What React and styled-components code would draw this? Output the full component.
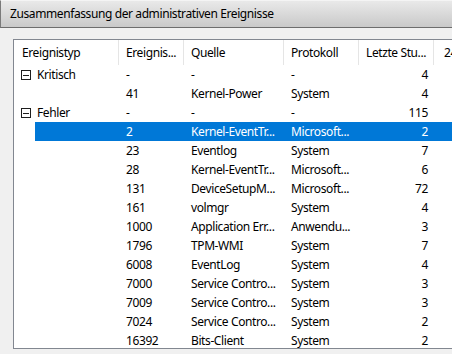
import React from 'react';
import styled, { createGlobalStyle, css } from 'styled-components';

const GlobalStyle = createGlobalStyle`
  html, body {
    margin: 0;
    padding: 0;
    background: #f0f0f0;
    overflow: hidden;
  }
  body {
    font-family: "Segoe UI", "Noto Sans", "Liberation Sans", sans-serif;
    font-size: 12px;
    letter-spacing: -0.4px;
    color: #000;
  }
`;

const Window = styled.div`
  width: 452px;
  height: 354px;
  overflow: hidden;
  background: #f0f0f0;
`;

const TitleBar = styled.div`
  height: 28px;
  box-sizing: border-box;
  border-left: 1px solid #7a7a7a;
  border-top: 1px solid #f4f4f4;
  border-bottom: 1px solid #6d6d6d;
  background: linear-gradient(#e9e9e9, #c9c9c9);
  display: flex;
  align-items: center;
  padding-left: 9px;
  padding-bottom: 1px;
  width: 600px;
`;

const Panel = styled.div`
  padding: 11px 0 0 13px;
`;

const ListBox = styled.div`
  width: 600px;
  height: 310px;
  box-sizing: border-box;
  border: 1px solid #828790;
  background: #fff;
  overflow: hidden;
`;

const COLS = '105px 65px 100px 75px 75px 120px';

const HeaderRow = styled.div`
  display: grid;
  grid-template-columns: ${COLS};
  height: 25px;
`;

const HeaderCell = styled.div`
  display: flex;
  align-items: center;
  padding-left: ${(p) => p.$pad ?? 7}px;
  border-right: 1px solid #e5e5e5;
  padding-bottom: 1px;
  white-space: nowrap;
  overflow: hidden;
`;

const Row = styled.div`
  display: grid;
  grid-template-columns: ${COLS};
  height: 19px;
  align-items: center;
  ${(p) =>
    p.$selected &&
    css`
      background: linear-gradient(to right, transparent 21px, #0078d7 21px);
      color: #fff;
    `}
`;

const Cell = styled.div`
  padding-left: 7px;
  padding-right: ${(p) => (p.$right ? 6 : 0)}px;
  white-space: nowrap;
  text-align: ${(p) => (p.$right ? 'right' : 'left')};
`;

const GroupCell = styled.div`
  display: flex;
  align-items: center;
  padding-left: 7px;
  gap: 6px;
  white-space: nowrap;
`;

const Toggle = styled.span`
  position: relative;
  width: 10px;
  height: 10px;
  box-sizing: border-box;
  border: 1px solid #1e1e1e;
  flex: none;
  &::after {
    content: '';
    position: absolute;
    left: 1px;
    right: 1px;
    top: 4px;
    height: 1px;
    background: #1e1e1e;
  }
`;

const rows = [
  { group: 'Kritisch', id: '-', src: '-', log: '-', n: '4' },
  { id: '41', src: 'Kernel-Power', log: 'System', n: '4' },
  { group: 'Fehler', id: '-', src: '-', log: '-', n: '115' },
  { id: '2', src: 'Kernel-EventTr...', log: 'Microsoft...', n: '2', sel: true },
  { id: '23', src: 'Eventlog', log: 'System', n: '7' },
  { id: '28', src: 'Kernel-EventTr...', log: 'Microsoft...', n: '6' },
  { id: '131', src: 'DeviceSetupM...', log: 'Microsoft...', n: '72' },
  { id: '161', src: 'volmgr', log: 'System', n: '4' },
  { id: '1000', src: 'Application Err...', log: 'Anwendu...', n: '3' },
  { id: '1796', src: 'TPM-WMI', log: 'System', n: '7' },
  { id: '6008', src: 'EventLog', log: 'System', n: '4' },
  { id: '7000', src: 'Service Contro...', log: 'System', n: '3' },
  { id: '7009', src: 'Service Contro...', log: 'System', n: '3' },
  { id: '7024', src: 'Service Contro...', log: 'System', n: '2' },
  { id: '16392', src: 'Bits-Client', log: 'System', n: '2' },
];

export default function App() {
  return (
    <Window>
      <GlobalStyle />
      <TitleBar>Zusammenfassung der administrativen Ereignisse</TitleBar>
      <Panel>
        <ListBox>
          <HeaderRow>
            <HeaderCell $pad={8}>Ereignistyp</HeaderCell>
            <HeaderCell>Ereignis...</HeaderCell>
            <HeaderCell>Quelle</HeaderCell>
            <HeaderCell>Protokoll</HeaderCell>
            <HeaderCell>Letzte Stu...</HeaderCell>
            <HeaderCell $pad={10}>24 Stunden</HeaderCell>
          </HeaderRow>
          {rows.map((r, i) => (
            <Row key={i} $selected={r.sel}>
              {r.group ? (
                <GroupCell>
                  <Toggle />
                  {r.group}
                </GroupCell>
              ) : (
                <Cell />
              )}
              <Cell>{r.id}</Cell>
              <Cell>{r.src}</Cell>
              <Cell>{r.log}</Cell>
              <Cell $right>{r.n}</Cell>
              <Cell />
            </Row>
          ))}
        </ListBox>
      </Panel>
    </Window>
  );
}
